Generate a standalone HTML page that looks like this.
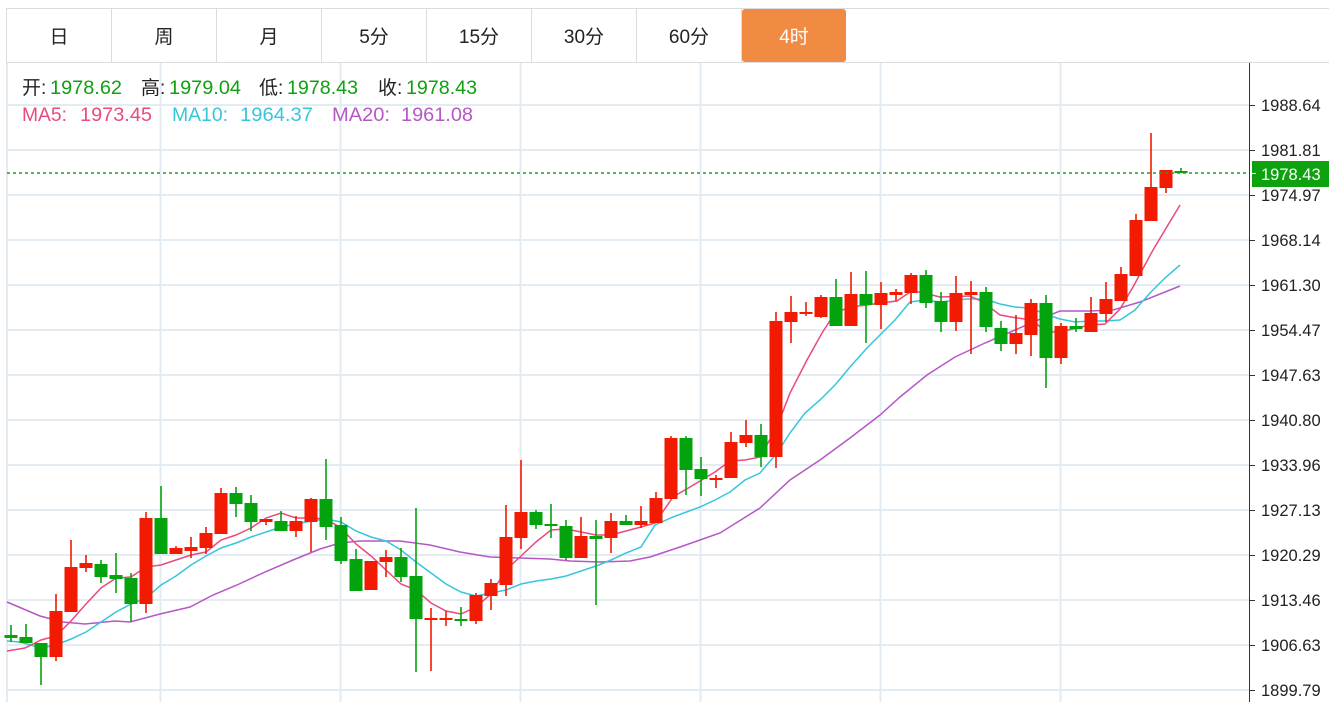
<!DOCTYPE html>
<html><head><meta charset="utf-8">
<style>
html,body{margin:0;padding:0;background:#fff;width:1329px;height:702px;overflow:hidden}
svg{display:block}
text{font-family:"Liberation Sans","Noto Sans CJK SC",sans-serif}
</style></head><body>
<svg id="s" width="1329" height="702" xmlns="http://www.w3.org/2000/svg">
<rect width="1329" height="702" fill="#fff"/>
<g id="grid" stroke="#e3ebf3" stroke-width="2"></g>
<!-- tabs -->
<line x1="6" y1="8.5" x2="1329" y2="8.5" stroke="#dcdcdc"/>
<line x1="6" y1="62.5" x2="1329" y2="62.5" stroke="#dcdcdc"/>
<g stroke="#dcdcdc">
<line x1="6.5" y1="8" x2="6.5" y2="62"/><line x1="111.5" y1="8" x2="111.5" y2="62"/>
<line x1="216.5" y1="8" x2="216.5" y2="62"/><line x1="321.5" y1="8" x2="321.5" y2="62"/>
<line x1="426.5" y1="8" x2="426.5" y2="62"/><line x1="531.5" y1="8" x2="531.5" y2="62"/>
<line x1="636.5" y1="8" x2="636.5" y2="62"/><line x1="741.5" y1="8" x2="741.5" y2="62"/>
</g>
<rect x="742" y="9" width="104" height="53" rx="3" fill="#f18a42"/>
<g font-size="19" fill="#222" text-anchor="middle">
<text x="59" y="43">日</text><text x="164" y="43">周</text><text x="269" y="43">月</text>
<text x="374" y="43">5分</text><text x="479" y="43">15分</text><text x="584" y="43">30分</text>
<text x="689" y="43">60分</text><text x="794" y="43" fill="#fff">4时</text>
</g>
<g id="ma"></g>
<g id="cd"></g>
<line x1="7" y1="173" x2="1249" y2="173" stroke="#1aa31a" stroke-width="1.5" stroke-dasharray="3,3"/>
<!-- axis -->
<line x1="1249.5" y1="63" x2="1249.5" y2="702" stroke="#333"/>
<g id="ax" font-size="16.5" fill="#222"></g>
<rect x="1252" y="161" width="77" height="26" fill="#0ea30e"/>
<line x1="1252" y1="173.5" x2="1256" y2="173.5" stroke="#fff"/>
<text x="1261" y="180" font-size="16.5" fill="#fff">1978.43</text>
<g font-size="19">
<text x="22" y="94" fill="#222">开:</text><text x="50" y="94" fill="#10a010" textLength="72" lengthAdjust="spacingAndGlyphs">1978.62</text>
<text x="141" y="94" fill="#222">高:</text><text x="169" y="94" fill="#10a010" textLength="72" lengthAdjust="spacingAndGlyphs">1979.04</text>
<text x="259" y="94" fill="#222">低:</text><text x="287" y="94" fill="#10a010" textLength="71" lengthAdjust="spacingAndGlyphs">1978.43</text>
<text x="378" y="94" fill="#222">收:</text><text x="406" y="94" fill="#10a010" textLength="71" lengthAdjust="spacingAndGlyphs">1978.43</text>
<text x="22" y="121" fill="#ea4a7c" textLength="45" lengthAdjust="spacingAndGlyphs">MA5:</text><text x="80" y="121" fill="#ea4a7c" textLength="72" lengthAdjust="spacingAndGlyphs">1973.45</text>
<text x="172" y="121" fill="#36c6dc" textLength="56" lengthAdjust="spacingAndGlyphs">MA10:</text><text x="240" y="121" fill="#36c6dc" textLength="73" lengthAdjust="spacingAndGlyphs">1964.37</text>
<text x="332" y="121" fill="#b657c6" textLength="58" lengthAdjust="spacingAndGlyphs">MA20:</text><text x="401" y="121" fill="#b657c6" textLength="72" lengthAdjust="spacingAndGlyphs">1961.08</text>
</g>
</svg>
<script>
var NS="http://www.w3.org/2000/svg";
function el(p,t,a){var e=document.createElementNS(NS,t);for(var k in a)e.setAttribute(k,a[k]);p.appendChild(e);return e;}
var g=document.getElementById('grid');
var ys=[105,150,195,240,285,330,375,420,465,510,555,600,645,690];
var labs=["1988.64","1981.81","1974.97","1968.14","1961.30","1954.47","1947.63","1940.80","1933.96","1927.13","1920.29","1913.46","1906.63","1899.79"];
ys.forEach(function(y){el(g,'line',{x1:7,y1:y,x2:1249,y2:y});});
[7,160.5,340.5,520.5,700.5,880.5,1060.5].forEach(function(x){el(g,'line',{x1:x,y1:63,x2:x,y2:702});});
var ax=document.getElementById('ax');
ys.forEach(function(y,i){el(ax,'line',{x1:1250,y1:y+.5,x2:1255,y2:y+.5,stroke:'#333'});var t=el(ax,'text',{x:1261,y:y+6});t.textContent=labs[i];});
var R='#f21a00',G='#03a30e';
var C=[
[635,638,625,642,G],[637,643,624,643,G],[643,657,643,685,G],[611,657,594,661,R],[567,612,540,612,R],
[563,568,555,572,R],[564,577,560,583,G],[575,579,553,593,G],[578,604,573,622,G],[518,604,512,613,R],
[518,554,486,554,G],[548,554,546,554,R],[547,551,537,558,R],[533,548,527,554,R],[493,534,488,534,R],
[493,504,487,517,G],[503,522,495,531,G],[519,522,519,525,R],[521,531,511,531,G],[521,531,516,537,R],
[499,522,498,552,R],[499,527,459,540,G],[525,561,517,564,G],[559,591,549,591,G],[561,590,561,590,R],
[557,562,550,577,R],[557,577,548,582,G],[576,619,508,672,G],[618,620,608,671,R],[618,620,611,626,R],
[619,621,607,626,G],[595,621,593,624,R],[583,596,579,610,R],[537,585,505,596,R],[512,538,460,549,R],
[512,525,510,529,G],[524,526,504,538,G],[526,558,520,560,G],[536,558,517,558,R],[536,539,520,605,G],
[521,538,513,553,R],[521,525,515,525,G],[521,525,506,528,R],[498,523,492,523,R],[438,499,436,499,R],
[438,470,436,495,G],[469,479,457,496,G],[478,480,475,488,R],[442,478,432,478,R],[435,443,420,447,R],
[435,457,424,467,G],[321,457,312,468,R],[312,322,296,343,R],[312,314,302,316,R],[297,317,295,318,R],
[297,326,279,326,G],[294,326,272,326,R],[294,305,271,343,G],[293,305,282,329,R],[292,295,289,301,R],
[275,293,273,304,R],[275,303,270,308,G],[301,322,292,332,G],[293,322,276,331,R],[292,295,281,354,R],
[292,327,287,332,G],[328,344,321,351,G],[333,344,315,354,R],[303,335,299,356,R],[303,358,295,388,G],
[326,358,323,364,R],[326,329,318,332,G],[313,332,297,332,R],[299,314,282,322,R],[274,301,267,301,R],
[220,276,214,276,R],[187,221,133,221,R],[170,188,170,193,R],[171,173,168,173,G]];
var cd=document.getElementById('cd');
C.forEach(function(c,i){var x=11+15*i;
el(cd,'line',{x1:x,y1:c[2],x2:x,y2:c[3],stroke:c[4],'stroke-width':1.6});
var h=Math.max(2,c[1]-c[0]);
el(cd,'rect',{x:x-6.5,y:c[0],width:13,height:h,fill:c[4]});});
var ma=document.getElementById('ma');
var M5="7,651 25,648 41,640 56,636 71,621 86,604 101,588 116,578 131,577 146,567 161,565 176,560 191,555 206,552 221,540 236,535 251,528 266,518 281,513 296,518 311,518 326,519 341,528 356,544 371,556 386,570 401,584 416,590 431,603 446,611 461,614 476,607 491,594 506,570 521,556 536,542 551,530 566,529 581,532 596,535 611,535 626,531 641,527 655,523 673,497 690,487 715,472 730,461 745,460 760,457 777,427 790,393 807,360 822,333 835,313 850,307 867,305 880,303 897,301 910,292 920,292 940,297 970,296 983,302 1000,315 1017,318 1033,320 1045,332 1060,332 1077,328 1090,325 1105,324 1120,309 1133,287 1153,250 1180,205";
var M10="7,641 20,642 41,648 56,645 71,639 86,632 101,622 116,612 131,604 146,598 161,585 176,576 191,565 206,556 221,548 236,543 251,537 266,532 281,527 296,524 311,521 326,519 341,522 356,531 371,537 386,541 401,550 416,562 431,573 446,584 461,592 476,596 491,593 506,590 521,584 536,581 551,579 566,576 581,571 596,566 611,560 626,553 641,547 655,525 673,517 700,507 715,500 730,492 745,480 760,473 777,453 790,433 805,413 820,400 835,385 850,367 867,348 880,335 895,320 910,302 925,300 940,302 967,299 985,299 1000,304 1015,307 1030,308 1045,314 1060,319 1075,322 1090,321 1105,321 1120,320 1135,310 1150,293 1165,278 1180,265";
var M20="7,602 40,616 63,622 85,624 115,621 130,622 160,614 190,607 213,595 237,585 265,572 293,560 320,549 340,543 360,541 400,541 430,545 460,552 490,557 520,558 550,559 570,561 600,562 630,561 650,557 680,547 700,540 720,533 760,508 790,480 820,460 850,438 880,415 900,397 927,375 955,357 985,343 1015,330 1045,317 1060,311 1090,311 1113,310 1140,302 1180,286";
[[M20,'#b657c6'],[M10,'#36c6dc'],[M5,'#ea4a7c']].forEach(function(m){el(ma,'polyline',{points:m[0],fill:'none',stroke:m[1],'stroke-width':1.5});});
</script>
</body></html>
